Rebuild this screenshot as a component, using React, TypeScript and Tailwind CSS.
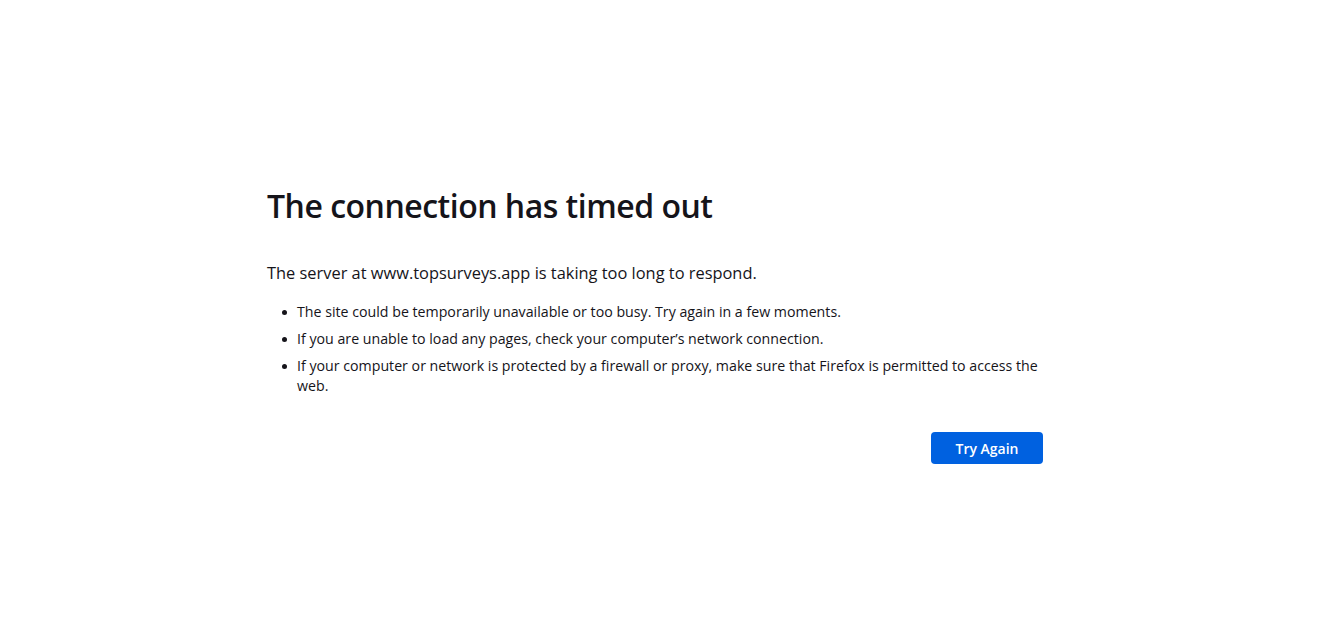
export default function App() {
  const items = [
    "The site could be temporarily unavailable or too busy. Try again in a few moments.",
    "If you are unable to load any pages, check your computer’s network connection.",
    "If your computer or network is protected by a firewall or proxy, make sure that Firefox is permitted to access the web.",
  ];
  return (
    <div className="min-h-screen w-full bg-white flex text-[#15141a]" style={{ fontFamily: '"Open Sans", "Noto Sans", sans-serif' }}>
      <div className="ml-[267px] w-[776px] pt-[184px]">
        <h1 className="text-[32px] font-semibold leading-[44px] tracking-[-0.5px]">The connection has timed out</h1>
        <p className="mt-[33px] text-[16.4px] leading-[24px]">The server at www.topsurveys.app is taking too long to respond.</p>
        <ul className="mt-[17px] text-[14.2px] leading-[20px] flex flex-col gap-[7px]">
          {items.map((t) => (
            <li key={t} className="flex">
              <span className="w-[30px] shrink-0 flex justify-end pr-[10px] pt-[8px]">
                <span className="block w-[5px] h-[5px] rounded-full bg-[#15141a]" />
              </span>
              <span>{t}</span>
            </li>
          ))}
        </ul>
        <div className="mt-[36px] flex justify-end">
          <button className="w-[112px] h-[32px] rounded-[4px] bg-[#0061e0] text-white text-[14px] font-semibold">Try Again</button>
        </div>
      </div>
    </div>
  );
}
